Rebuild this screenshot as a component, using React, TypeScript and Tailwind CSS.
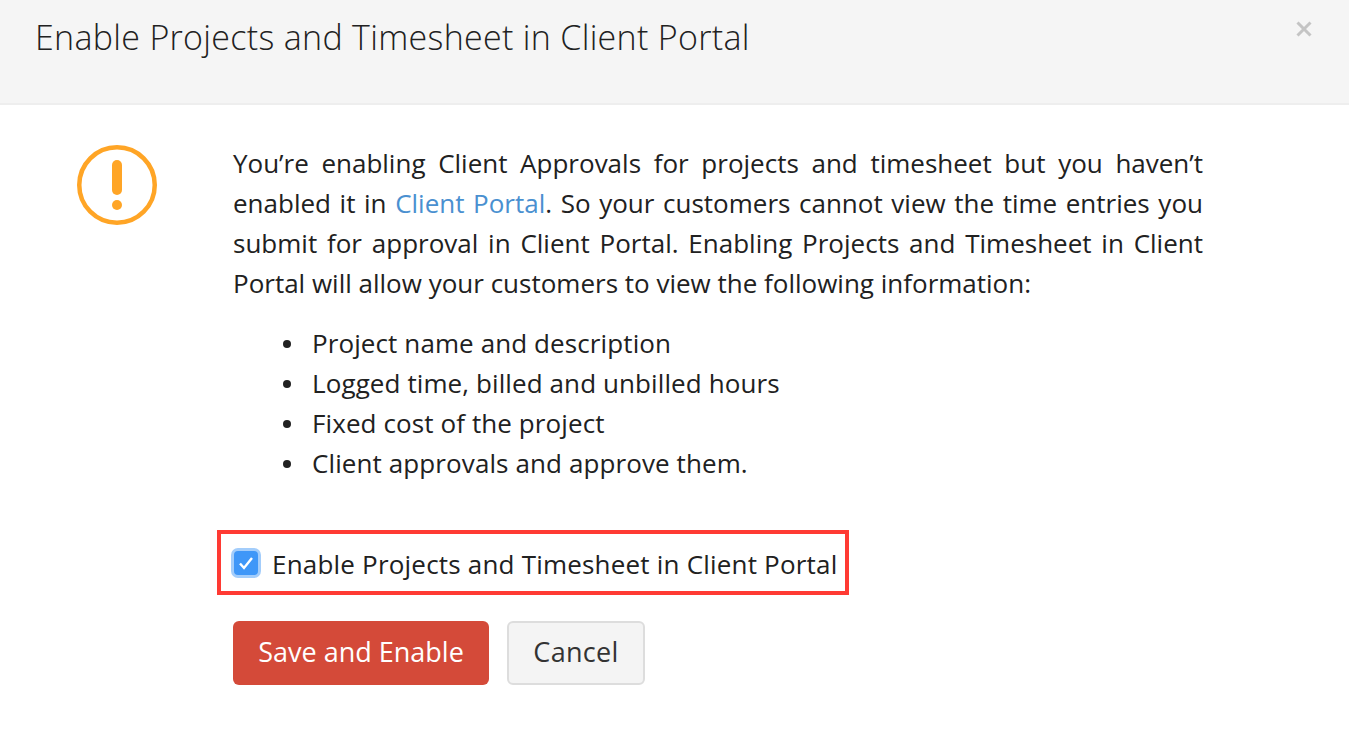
import React from 'react';

const items = [
  'Project name and description',
  'Logged time, billed and unbilled hours',
  'Fixed cost of the project',
  'Client approvals and approve them.',
];

const App = () => {
  return (
    <div className="h-[751px] w-[1349px] overflow-hidden bg-white font-['Open_Sans','Noto_Sans',sans-serif] text-[#212121]">
      <header className="relative h-[105px] border-b-2 border-[#eeeeee] bg-[#f5f5f5] pl-[35px] pt-[16px]">
        <h1 className="text-[34px] leading-[42px] tracking-[0.3px] font-light">Enable Projects and Timesheet in Client Portal</h1>
        <svg className="absolute right-[37px] top-[21px]" width="16" height="16" viewBox="0 0 16 16" fill="none">
          <path d="M1.5 1.5 14.5 14.5M14.5 1.5 1.5 14.5" stroke="#c4c4c4" strokeWidth="3" />
        </svg>
      </header>

      <main className="flex pl-[77px] pt-[40px]">
        <svg className="mr-[76px] shrink-0" width="80" height="80" viewBox="0 0 80 80" fill="none">
          <circle cx="40" cy="40" r="37.75" stroke="#ffa526" strokeWidth="4.5" />
          <rect x="35" y="15" width="10" height="35" rx="5" fill="#ffa526" />
          <circle cx="40" cy="60" r="5" fill="#ffa526" />
        </svg>

        <div className="mt-[-2px] w-[970px]">
          <p className="text-justify text-[26px] leading-[40px]">
            You’re enabling Client Approvals for projects and timesheet but you haven’t enabled it in{' '}
            <span className="text-[#4a90d0]">Client Portal</span>. So your customers cannot view the time entries you
            submit for approval in Client Portal. Enabling Projects and Timesheet in Client Portal will allow your
            customers to view the following information:
          </p>

          <ul className="mt-[20px] flex flex-col pl-[50px] text-[26px] leading-[40px] tracking-[0.1px]">
            {items.map((item) => (
              <li key={item} className="flex items-center gap-[21px]">
                <span className="mt-[2px] size-[8px] rounded-full bg-[#212121]" />
                {item}
              </li>
            ))}
          </ul>

          <div className="ml-[-16px] mt-[47px] flex h-[65px] w-[632px] items-center border-[4px] border-[#ff3a33] pl-[10px]">
            <span className="mr-[11px] flex size-[30px] items-center justify-center rounded-[7px] border-[3px] border-[#a3cdfb] bg-[#3f97f8]">
              <svg width="16" height="14" viewBox="0 0 16 14" fill="none">
                <path d="M2 7.5 6 12 14 2" stroke="white" strokeWidth="2.4" />
              </svg>
            </span>
            <span className="pt-[2px] text-[26px] leading-[40px] tracking-[0.2px] font-medium">Enable Projects and Timesheet in Client Portal</span>
          </div>

          <div className="mt-[26px] flex gap-[18px]">
            <button className="h-[64px] w-[256px] rounded-[6px] bg-[#d44a39] pb-[2px] text-[27px] font-medium text-white">
              Save and Enable
            </button>
            <button className="h-[64px] w-[138px] rounded-[6px] border-2 border-[#dddddd] bg-[#f4f4f4] pb-[2px] text-[27px] tracking-[0.3px] text-[#333333]">
              Cancel
            </button>
          </div>
        </div>
      </main>
    </div>
  );
};

export default App;
